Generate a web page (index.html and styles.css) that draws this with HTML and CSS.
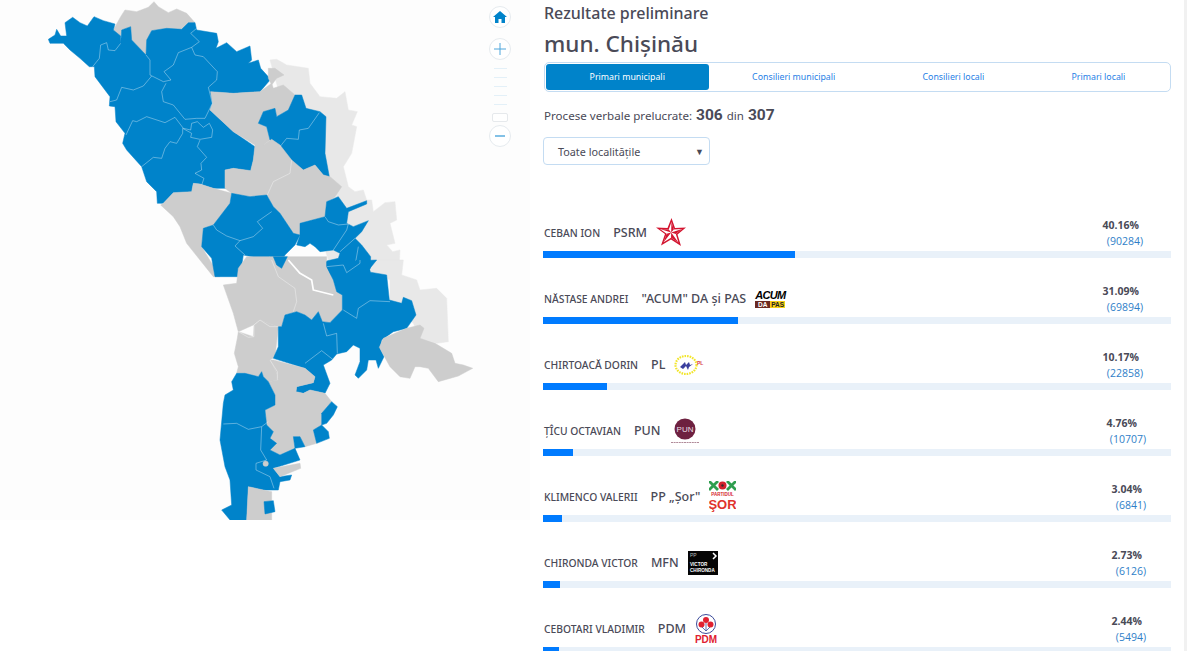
FILE: index.html
```html
<!DOCTYPE html>
<html lang="ro">
<head>
    <meta charset="UTF-8">
    <meta name="viewport" content="width=device-width, initial-scale=1.0">
    <title>Rezultate preliminare</title>
    <link rel="stylesheet" href="styles.css">
</head>
<body>
    <div class="page">
        <div class="map-pane">
            <svg class="map" viewBox="0 0 530 520" width="530" height="520">
                <g transform="scale(.33333)">
                    <polygon class="land-light" points="810,180 830,178 860,195 925,205 930,250 960,290 1010,295 1035,275 1045,330 1072,335 1055,375 1070,380 1055,460 1030,500 1045,560 1065,575 1090,570 1100,600 1115,600 1120,635 1155,608 1185,605 1190,660 1170,670 1185,730 1160,735 1178,755 1200,750 1198,790 1180,830 1000,830 900,500"/>
                    <polygon class="land-gray" points="340,90 362,50 375,30 410,35 445,22 462,5 475,20 505,38 530,27 560,40 585,68 565,68 545,88 500,85 455,92 440,120 438,165 395,120 392,80 365,90 362,108"/>
                    <polygon class="land-blue" points="145,118 165,105 170,88 182,108 200,108 195,68 218,52 240,68 262,78 282,50 310,62 345,72 340,90 362,108 362,130 365,90 392,80 395,120 438,165 440,120 455,92 500,85 545,88 565,68 585,68 590,90 650,100 655,125 648,145 680,128 710,155 750,138 755,180 745,190 775,180 782,205 812,238 780,275 700,280 632,275 638,310 630,330 700,395 765,440 760,480 752,512 700,505 675,510 680,565 640,565 600,552 580,550 575,575 520,578 490,610 472,610 470,575 440,545 425,500 380,450 368,430 375,400 348,365 345,320 328,318 330,290 285,230 283,200 268,200 240,175 210,150 190,130 150,130"/>
                    <polygon class="land-gray" points="805,205 825,205 852,225 830,235 815,255 805,235"/>
                    <polygon class="land-gray" points="632,275 700,280 780,275 815,250 820,265 850,255 885,285 865,330 830,350 825,325 790,335 775,370 800,380 810,420 790,435 765,435 700,395 630,330 638,310"/>
                    <polygon class="land-blue" points="885,285 905,285 918,325 960,335 978,350 975,460 988,530 970,525 945,495 910,510 870,480 838,445 810,420 800,380 775,370 790,335 825,325 830,350 865,330"/>
                    <polygon class="land-gray" points="765,435 790,435 815,418 840,435 875,480 910,510 945,495 970,525 990,530 1025,560 1005,590 980,605 990,630 975,650 900,670 900,705 880,700 840,640 820,620 800,585 750,590 695,580 675,565 675,510 700,505 752,512 760,480"/>
                    <polygon class="land-gray" points="580,550 600,552 640,565 695,580 690,610 640,675 610,685 605,740 635,790 660,830 640,830 560,730 540,680 520,650 482,615 490,610 520,578 575,575"/>
                    <polygon class="land-blue" points="695,580 750,590 800,585 820,620 840,640 880,700 900,705 885,735 855,765 835,805 810,770 780,775 730,765 720,830 645,830 635,775 605,740 610,685 640,675 690,610"/>
                    <polygon class="land-blue" points="900,670 975,650 980,605 1015,590 1040,625 1100,602 1100,612 1045,635 1040,670 1060,680 1105,662 1085,695 1065,715 1085,735 1112,770 1110,830 1000,830 965,800 970,785 1015,775 1020,760 1000,750 960,755 945,740 930,730 915,740 890,735 900,705"/>
                    <polyline class="border" points="362,130 345,152 325,150 320,128 302,135 298,175 278,200"/>
                    <polyline class="border" points="438,165 450,180 450,225 490,245 513,240 492,215 520,195 535,158 575,142 598,125 572,100 590,85"/>
                    <polyline class="border" points="575,142 585,165 610,170 652,215 650,240 625,262 637,310 615,355 590,355"/>
                    <polyline class="border" points="455,228 430,258 400,270 365,262 350,300 330,305"/>
                    <polyline class="border" points="498,250 485,275 490,305 520,315 555,358 590,355"/>
                    <polyline class="border" points="378,405 398,362 410,365 440,350 495,368 525,352 550,385 572,390 575,370 592,365 610,382 628,370 638,390 635,412 600,418 572,412 575,400 548,385 548,400 530,430 510,425 495,445 485,475 460,472 425,500"/>
                    <polyline class="border" points="600,420 592,440 620,472 603,490 605,510 585,520 612,535 605,555"/>
                    <polyline class="border" points="958,338 925,385 898,390 895,418 860,415 840,440"/>
                    <polyline class="border" points="640,675 650,690 680,708 720,722 760,710 788,685 772,665 815,635"/>
                    <polyline class="border" points="720,722 705,738 735,765"/>
                    <polyline class="border" points="975,650 985,665 1015,675 1045,672 1040,690 1000,750"/>
                    <polyline class="border" points="1065,715 1020,755"/>
                    <polyline class="border" points="1075,740 1068,780 1040,810"/>
                    <polyline class="border" points="875,480 870,520 820,545 802,585"/>
                </g>
                <g transform="translate(130,260) scale(.33333)">
                    <polygon class="land-light" points="740,0 820,0 815,45 860,60 870,90 920,85 950,115 955,245 920,250 870,235 850,190 780,130 780,60 720,30"/>
                    <polygon class="land-gray" points="350,-10 590,-10 590,20 610,60 620,95 637,105 637,150 600,188 577,185 565,155 545,180 525,165 500,155 465,165 455,200 445,200 390,180 370,195 325,215 310,160 280,75 320,70 325,25"/>
                    <polygon class="land-blue" points="430,-10 472,-10 455,25 440,15"/>
                    <polygon class="land-gray" points="325,215 370,230 372,195 390,180 445,200 435,290 420,300 440,340 445,360 415,365 400,350 395,335 385,350 345,340 320,340 325,320 313,280 322,235"/>
                    <polygon class="land-blue" points="590,5 740,0 712,35 770,45 778,120 815,130 820,112 845,122 858,165 830,205 790,215 755,240 750,265 762,290 745,325 738,300 715,300 710,330 685,355 675,345 690,305 690,265 670,255 650,275 620,282 605,300 580,315 600,370 585,400 540,390 520,400 498,395 500,380 550,368 555,350 525,325 430,295 445,260 445,200 455,200 465,165 500,155 525,165 545,180 565,155 577,185 600,188 637,150 637,105 620,95 610,60 590,20"/>
                    <polygon class="land-gray" points="870,195 882,205 870,235 915,250 965,280 975,310 1000,315 1028,325 985,348 925,365 895,325 870,320 855,320 840,355 810,350 780,320 748,262 760,235 830,205"/>
                    <polygon class="land-gray" points="430,300 525,325 555,350 550,368 500,380 498,395 520,400 540,390 585,400 605,425 575,460 575,495 550,510 560,550 525,560 510,530 490,530 495,565 450,585 420,570 440,550 420,535 430,515 410,495 405,450 435,435 435,405 415,365 445,360 440,340 420,300"/>
                    <polygon class="land-blue" points="320,340 345,340 385,350 395,335 400,350 415,365 435,405 435,435 405,450 410,495 430,515 420,535 440,550 420,570 450,585 495,565 510,600 430,625 450,650 485,645 480,660 450,665 445,690 400,690 355,680 350,780 300,780 275,750 305,735 300,660 285,620 270,540 280,430 285,405 310,390 305,365"/>
                    <polygon class="land-blue" points="605,425 622,440 610,465 590,490 575,495 575,460"/>
                    <polygon class="land-blue" points="550,510 575,495 595,515 598,535 560,550"/>
                    <polygon class="land-blue" points="490,530 510,530 525,560 495,565"/>
                    <polygon class="land-gray" points="430,625 510,610 512,625 450,650"/>
                    <polygon class="land-gray" points="355,680 400,690 425,695 425,780 350,780"/>
                    <polygon class="land-blue" points="402,725 430,722 435,755 405,762"/>
                    <circle class="land-gray" cx="407" cy="611" r="8"/>
                    <polyline class="border-city" points="475,0 510,40 545,60 550,90 610,105"/>
                    <polyline class="border" points="425,0 445,50 495,85 500,125 490,155"/>
                    <polyline class="border" points="325,215 355,232 372,230 372,195 390,180 420,200 445,200"/>
                    <polyline class="border" points="590,20 640,15 650,38 690,10 690,0"/>
                    <polyline class="border" points="640,150 680,175 685,145 720,122 780,125"/>
                    <polyline class="border" points="580,190 590,228 620,220 622,280"/>
                    <polyline class="border" points="525,310 575,272 608,298"/>
                    <polyline class="border" points="420,300 442,335 442,360"/>
                    <polyline class="border" points="280,492 320,490 355,508 395,500 415,485"/>
                    <polyline class="border" points="395,500 392,570 410,600 378,610 378,630 420,650 432,685"/>
                </g>
            </svg>
            <div class="map-controls">
                <button class="map-btn home-btn">
                    <svg viewBox="0 0 14 12" width="14" height="12"><path d="M7 0 L14 6 L12 6 L12 12 L8.5 12 L8.5 8 L5.5 8 L5.5 12 L2 12 L2 6 L0 6 Z" fill="#0083ca"/></svg>
                </button>
                <button class="map-btn plus-btn">
                    <svg viewBox="0 0 12 12" width="12" height="12"><path d="M6 0 V12 M0 6 H12" stroke="#4ea6dc" stroke-width="1"/></svg>
                </button>
                <div class="zoom-ticks"><i></i><i></i><i></i><i></i><i></i></div>
                <div class="zoom-handle"></div>
                <button class="map-btn minus-btn">
                    <svg viewBox="0 0 12 12" width="12" height="12"><path d="M1 6 H11" stroke="#4ea6dc" stroke-width="1.4"/></svg>
                </button>
            </div>
        </div>

        <div class="results">
            <h2 class="subtitle">Rezultate preliminare</h2>
            <h1 class="title">mun. Chişinău</h1>
            <div class="tabs">
                <a class="tab active">Primari municipali</a>
                <a class="tab">Consilieri municipali</a>
                <a class="tab">Consilieri locali</a>
                <a class="tab">Primari locali</a>
            </div>
            <p class="processed">Procese verbale prelucrate: <b>306</b> <span>din</span> <b>307</b></p>
            <div class="select"><span>Toate localităţile</span><i>▼</i></div>

            <div class="candidates">
                <div class="candidate">
                    <div class="candidate-head">
                        <span class="name">CEBAN ION</span>
                        <span class="party">PSRM</span>
                        <svg class="logo" viewBox="0 0 30 30" width="30" height="30">
                            <polygon points="15.5,0 19,10 30,9.5 21.5,16.5 25,28 15,21.5 5,27.5 9,16 0,9.5 11.5,10" fill="#d3142f"/>
                            <polygon points="15.4,4 17.8,11.6 26,11 19.8,16 22.4,24.5 15,19.8 7.6,24.2 10.6,15.8 4,11 12.8,11.6" fill="#fff"/>
                            <path d="M15.2 14.5 L15.4 4 L17.8 11.6 Z M15.2 14.5 L26 11 L19.8 16 Z M15.2 14.5 L22.4 24.5 L15 19.8 Z M15.2 14.5 L7.6 24.2 L10.6 15.8 Z M15.2 14.5 L4 11 L12.8 11.6 Z" fill="#d3142f"/>
                        </svg>
                        <div class="nums nums-top"><b>40.16%</b><span>(90284)</span></div>
                    </div>
                    <div class="bar"><div class="bar-fill" style="width:252px"></div></div>
                </div>

                <div class="candidate">
                    <div class="candidate-head">
                        <span class="name">NĂSTASE ANDREI</span>
                        <span class="party">"ACUM" DA şi PAS</span>
                        <div class="logo logo-acum">
                            <em>ACUM</em>
                            <div><span class="acum-da">DA</span><span class="acum-pas">PAS</span></div>
                        </div>
                        <div class="nums nums-top"><b>31.09%</b><span>(69894)</span></div>
                    </div>
                    <div class="bar"><div class="bar-fill" style="width:195px"></div></div>
                </div>

                <div class="candidate">
                    <div class="candidate-head">
                        <span class="name">CHIRTOACĂ DORIN</span>
                        <span class="party">PL</span>
                        <svg class="logo" viewBox="0 0 30 24" width="30" height="24">
                            <ellipse cx="12" cy="12" rx="10.5" ry="9" fill="none" stroke="#f2e52a" stroke-width="2.2" stroke-dasharray="1.6 1"/>
                            <path d="M6 14 L11 9 L12 12 L15 9 L16 12 L19 11 L15 14 L14 17 L12 13 L9 16 Z" fill="#3a3f9e"/>
                            <text x="23" y="12" class="pl-mark">PL</text>
                        </svg>
                        <div class="nums nums-top"><b>10.17%</b><span>(22858)</span></div>
                    </div>
                    <div class="bar"><div class="bar-fill" style="width:64px"></div></div>
                </div>

                <div class="candidate">
                    <div class="candidate-head">
                        <span class="name">ŢÎCU OCTAVIAN</span>
                        <span class="party">PUN</span>
                        <svg class="logo" viewBox="0 0 30 26" width="30" height="26">
                            <circle cx="15" cy="11" r="10.5" fill="#6e2140"/>
                            <text x="15" y="14" class="pun-mark">PUN</text>
                            <path d="M1 24.5 H29" stroke="#b08a99" stroke-width="1" stroke-dasharray="2 .6"/>
                        </svg>
                        <div class="nums nums-mid"><b>4.76%</b><span>(10707)</span></div>
                    </div>
                    <div class="bar"><div class="bar-fill" style="width:30px"></div></div>
                </div>

                <div class="candidate">
                    <div class="candidate-head">
                        <span class="name">KLIMENCO VALERII</span>
                        <span class="party">PP „Şor"</span>
                        <svg class="logo" viewBox="0 0 27 31" width="27" height="31">
                            <path d="M0 0 L9 9 M9 0 L0 9 M18 0 L27 9 M27 0 L18 9" stroke="#2f9e4f" stroke-width="2.8"/>
                            <circle cx="13.5" cy="4.5" r="4" fill="#d3222c"/>
                            <circle cx="13.5" cy="4.5" r="1.2" fill="#3a2a2a"/>
                            <text x="13.5" y="14.5" class="sor-small">PARTIDUL</text>
                            <text x="13.5" y="27.5" class="sor-big">ŞOR</text>
                        </svg>
                        <div class="nums"><b>3.04%</b><span>(6841)</span></div>
                    </div>
                    <div class="bar"><div class="bar-fill" style="width:19px"></div></div>
                </div>

                <div class="candidate">
                    <div class="candidate-head">
                        <span class="name">CHIRONDA VICTOR</span>
                        <span class="party">MFN</span>
                        <svg class="logo" viewBox="0 0 30 24" width="30" height="24">
                            <rect width="30" height="24" fill="#050505"/>
                            <text x="2" y="6" class="mfn-pp">PP</text>
                            <path d="M25 2 L28 5 L25 8" fill="none" stroke="#fff" stroke-width="1.5"/>
                            <text x="2" y="15" class="mfn-name">VICTOR</text>
                            <text x="2" y="21" class="mfn-name">CHIRONDA</text>
                        </svg>
                        <div class="nums"><b>2.73%</b><span>(6126)</span></div>
                    </div>
                    <div class="bar"><div class="bar-fill" style="width:17px"></div></div>
                </div>

                <div class="candidate">
                    <div class="candidate-head">
                        <span class="name">CEBOTARI VLADIMIR</span>
                        <span class="party">PDM</span>
                        <svg class="logo" viewBox="0 0 22 29" width="22" height="29">
                            <circle cx="11" cy="10" r="9.5" fill="#fff" stroke="#3b4a9a" stroke-width="1"/>
                            <circle cx="11" cy="6" r="3" fill="#e02030"/>
                            <circle cx="6.5" cy="10.5" r="3" fill="#e02030"/>
                            <circle cx="15.5" cy="10.5" r="3" fill="#e02030"/>
                            <path d="M11 9 V17 M7 13 L11 17 M15 13 L11 17" stroke="#3b4a9a" stroke-width=".8"/>
                            <text x="11" y="28.5" class="pdm-mark">PDM</text>
                        </svg>
                        <div class="nums"><b>2.44%</b><span>(5494)</span></div>
                    </div>
                    <div class="bar"><div class="bar-fill" style="width:16px"></div></div>
                </div>
            </div>
        </div>
        <div class="scroll-edge"></div>
    </div>
</body>
</html>
```

FILE: styles.css
```css
html, body {
    margin: 0;
    height: 100%;
    overflow: hidden;
    background: #fff;
}
body {
    font-family: "Noto Sans", Arial, sans-serif;
    color: #4a4a57;
}
.page {
    display: flex;
    height: 651px;
}

/* map */
.map-pane {
    position: relative;
    flex: 0 0 530px;
    height: 520px;
    background: #fdfdfd;
    overflow: hidden;
}
.map {
    display: block;
    filter: blur(.3px);
}
.land-blue {
    fill: #0083ca;
    stroke: #0083ca;
    stroke-width: 1.5;
    stroke-linejoin: round;
}
.land-gray {
    fill: #cdcdcd;
    stroke: #cdcdcd;
    stroke-width: 1.5;
    stroke-linejoin: round;
}
.land-light {
    fill: #e8e8e8;
    stroke: #e8e8e8;
    stroke-width: 1.5;
    stroke-linejoin: round;
}
.border {
    fill: none;
    stroke: #fff;
    stroke-opacity: .55;
    stroke-width: 2;
    stroke-linejoin: round;
}
.border-city {
    fill: none;
    stroke: #fff;
    stroke-width: 5;
    stroke-linejoin: round;
}
.map-controls {
    position: absolute;
    top: 6px;
    left: 489px;
    width: 22px;
    display: flex;
    flex-direction: column;
    align-items: center;
}
.map-btn {
    width: 22px;
    height: 22px;
    padding: 0;
    border: 1px solid #e6ebef;
    border-radius: 50%;
    background: #fff;
    display: flex;
    align-items: center;
    justify-content: center;
}
.plus-btn {
    margin-top: 10px;
}
.zoom-ticks {
    margin-top: 8px;
    display: flex;
    flex-direction: column;
    gap: 8px;
}
.zoom-ticks i {
    display: block;
    width: 13px;
    height: 1px;
    background: #e3f0f8;
}
.zoom-handle {
    width: 14px;
    height: 7px;
    margin-top: 8px;
    border: 1px solid #e6e9ec;
    border-radius: 2px;
    background: #fff;
}
.minus-btn {
    margin-top: 3px;
}

/* results */
.results {
    flex: 1;
    padding: 0 13px 0 13px;
    min-width: 0;
}
.subtitle {
    margin: 4px 0 0 1px;
    font-size: 16px;
    line-height: 19px;
    font-weight: 500;
}
.title {
    margin: 5px 0 3px 1px;
    font-size: 22.5px;
    line-height: 31px;
    font-weight: 500;
}
.tabs {
    display: flex;
    box-sizing: border-box;
    margin: 0 0 0 1px;
    padding: 1px;
    height: 30px;
    border: 1px solid #c4dcf2;
    border-radius: 5px;
}
.tab {
    flex: auto;
    padding: 0 43px;
    font-size: 8.8px;
    line-height: 26px;
    text-align: center;
    white-space: nowrap;
    color: #1f7fe6;
    border-radius: 3px;
}
.tab.active {
    background: #0083ca;
    color: #fff;
}
.processed {
    margin: 12px 0 0 1px;
    font-size: 11.6px;
    line-height: 22px;
    display: flex;
    align-items: baseline;
    gap: 4px;
}
.processed b {
    font-family: Roboto, Arial, sans-serif;
    font-size: 15.5px;
    font-weight: 700;
}
.processed span {
    font-size: 11.5px;
}
.select {
    display: flex;
    justify-content: space-between;
    align-items: center;
    box-sizing: border-box;
    width: 167px;
    height: 28px;
    margin: 10px 0 0;
    padding: 0 5px 0 14px;
    border: 1px solid #c4dcf2;
    border-radius: 4px;
    font-size: 10.8px;
}
.select i {
    font-style: normal;
    font-size: 9px;
}
.candidates {
    margin-top: 27px;
}
.candidate {
    height: 66px;
}
.candidate-head {
    display: flex;
    align-items: center;
    box-sizing: border-box;
    height: 59px;
    padding-top: 22px;
    padding-left: 1px;
}
.name {
    font-size: 10.3px;
    font-weight: 500;
    margin-right: 13px;
    white-space: nowrap;
}
.party {
    font-size: 12.5px;
    font-weight: 500;
    margin-right: 9px;
    white-space: nowrap;
}
.nums {
    margin-left: auto;
    margin-right: 25px;
    display: flex;
    flex-direction: column;
    align-items: flex-end;
    font-family: "Open Sans", Arial, sans-serif;
    font-size: 10.5px;
    line-height: 16px;
}
.nums b {
    margin-right: 4px;
    font-weight: 700;
}
.nums span {
    color: #2f80c8;
}
.nums-top {
    margin-right: 28px;
}
.nums-mid b {
    margin-right: 9px;
}
.bar {
    height: 7px;
    background: #e9f1f9;
}
.bar-fill {
    height: 7px;
    background: #007bff;
}

/* party logos */
.logo-acum {
    width: 30px;
    font-family: "Liberation Sans", Arial, sans-serif;
    line-height: 1;
}
.logo-acum em {
    display: block;
    font-size: 11px;
    font-weight: 700;
    letter-spacing: -.7px;
    line-height: 11px;
    color: #000;
}
.logo-acum div {
    display: flex;
    font-size: 6.5px;
    font-weight: 700;
    line-height: 7px;
}
.acum-da {
    flex: 0 0 15px;
    text-align: center;
    background: #6b2a22;
    color: #fff;
}
.acum-pas {
    flex: 1;
    text-align: center;
    background: #f7d117;
    color: #222;
}
.pl-mark {
    font: 700 5px "Liberation Sans", sans-serif;
    fill: #d8404f;
}
.pun-mark {
    font: 8px "Liberation Sans", sans-serif;
    fill: #eadfe4;
    text-anchor: middle;
}
.sor-small {
    font: 700 4.5px "Liberation Sans", sans-serif;
    fill: #d3222c;
    text-anchor: middle;
}
.sor-big {
    font: 700 13px "Liberation Sans", sans-serif;
    fill: #e0332c;
    text-anchor: middle;
}
.mfn-pp {
    font: 5px "Liberation Sans", sans-serif;
    fill: #bbb;
}
.mfn-name {
    font: 700 4.6px "Liberation Sans", sans-serif;
    fill: #fff;
}
.pdm-mark {
    font: 700 10px "Liberation Sans", sans-serif;
    fill: #e02030;
    text-anchor: middle;
}
.scroll-edge {
    flex: 0 0 3px;
    background: #f1f1f1;
}
```
